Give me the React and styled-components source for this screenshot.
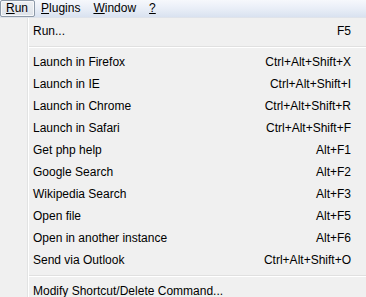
import React from 'react'
import styled, { createGlobalStyle } from 'styled-components'

const GlobalStyle = createGlobalStyle`
  html, body {
    margin: 0;
    padding: 0;
    background: #f0f0f0;
  }
  body {
    font-family: "Liberation Sans", Arial, sans-serif;
    font-size: 12px;
    color: #000;
  }
`

const items = [
  ['Launch in Firefox', 'Ctrl+Alt+Shift+X'],
  ['Launch in IE', 'Ctrl+Alt+Shift+I'],
  ['Launch in Chrome', 'Ctrl+Alt+Shift+R'],
  ['Launch in Safari', 'Ctrl+Alt+Shift+F'],
  ['Get php help', 'Alt+F1'],
  ['Google Search', 'Alt+F2'],
  ['Wikipedia Search', 'Alt+F3'],
  ['Open file', 'Alt+F5'],
  ['Open in another instance', 'Alt+F6'],
  ['Send via Outlook', 'Ctrl+Alt+Shift+O'],
]

const App = () => {
  return (
    <Screen>
      <GlobalStyle />
      <MenuBar>
        <MenuTitle $active><u>R</u>un</MenuTitle>
        <MenuTitle><u>P</u>lugins</MenuTitle>
        <MenuTitle><u>W</u>indow</MenuTitle>
        <MenuTitle><u>?</u></MenuTitle>
      </MenuBar>
      <Dropdown>
        <Gutter />
        <List>
          <Item>
            <span>Run...</span>
            <Shortcut>F5</Shortcut>
          </Item>
          <Separator />
          {items.map(([label, keys]) => (
            <Item key={label}>
              <span>{label}</span>
              <Shortcut>{keys}</Shortcut>
            </Item>
          ))}
          <Separator />
          <Item>
            <span>Modify Shortcut/Delete Command...</span>
          </Item>
        </List>
      </Dropdown>
    </Screen>
  )
}

const Screen = styled.div`
  width: 366px;
  height: 297px;
  overflow: hidden;
  background: #f0f0f0;
`

const MenuBar = styled.div`
  display: flex;
  align-items: stretch;
  height: 17px;
  border-bottom: 1px solid #dfe3ea;
  background: linear-gradient(to bottom, #f6f8fc 0%, #e9eef7 50%, #d9e2f0 100%);
`

const MenuTitle = styled.div`
  display: flex;
  align-items: center;
  padding: 0 6px 0 5px;
  line-height: 15px;
  border: 1px solid ${p => (p.$active ? '#8d99a8' : 'transparent')};
  border-radius: 2px;
  background: ${p => (p.$active ? 'linear-gradient(to bottom, #eef0f3, #dde2e9)' : 'transparent')};
  box-shadow: ${p => (p.$active ? 'inset 0 0 0 1px #f7f8fa' : 'none')};

  u {
    text-underline-offset: 1px;
  }
`

const Dropdown = styled.div`
  display: flex;
  height: 279px;
`

const Gutter = styled.div`
  width: 27px;
  flex: none;
  border-right: 1px solid #e2e3e3;
  box-shadow: 1px 0 0 #ffffff;
`

const List = styled.div`
  flex: 1;
  display: flex;
  flex-direction: column;
  padding-top: 2px;
  margin-left: 1px;
`

const Item = styled.div`
  display: flex;
  justify-content: space-between;
  align-items: center;
  height: 22px;
  flex: none;
  padding: 0 15px 0 4px;
  white-space: nowrap;
`

const Shortcut = styled.span`
  text-align: right;
`

const Separator = styled.div`
  flex: none;
  height: 1px;
  margin: 4px 0 3px;
  background: #e0e0e0;
  border-bottom: 1px solid #ffffff;
`

export default App
